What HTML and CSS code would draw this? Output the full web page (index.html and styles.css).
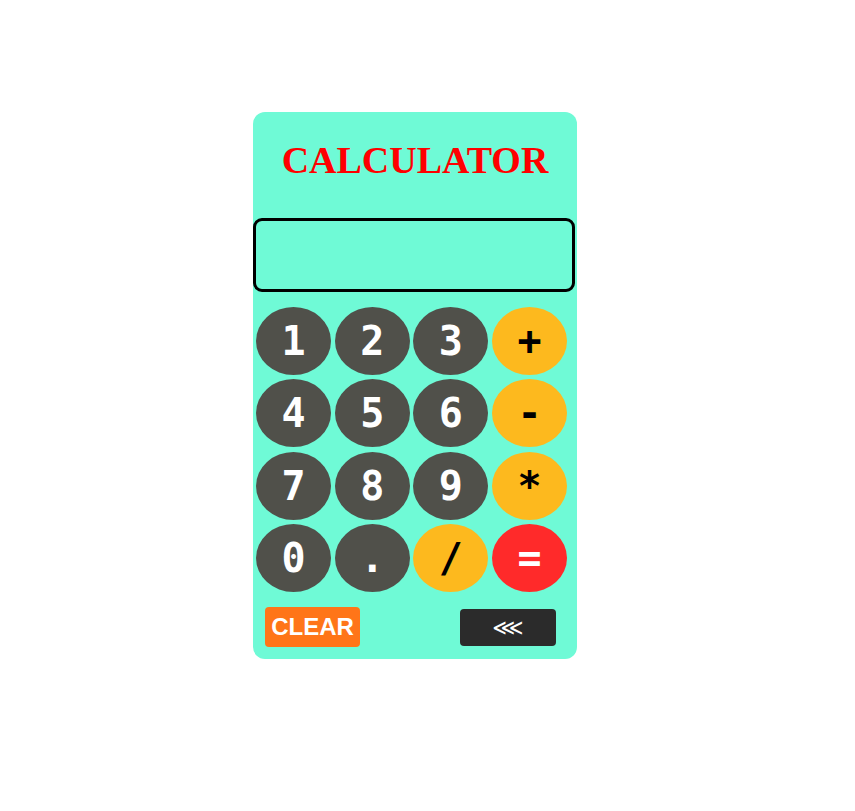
FILE: index.html
```html
<!DOCTYPE html>
<html>
<head>
<meta charset="utf-8">
<link rel="stylesheet" href="styles.css">
</head>
<body>
<div class="page">
  <div class="calc">
    <h1 class="title">CALCULATOR</h1>
    <div class="display"></div>
    <div class="keys">
      <button class="key num">1</button>
      <button class="key num">2</button>
      <button class="key num">3</button>
      <button class="key op">+</button>
      <button class="key num">4</button>
      <button class="key num">5</button>
      <button class="key num">6</button>
      <button class="key op">-</button>
      <button class="key num">7</button>
      <button class="key num">8</button>
      <button class="key num">9</button>
      <button class="key op">*</button>
      <button class="key num">0</button>
      <button class="key num">.</button>
      <button class="key op">/</button>
      <button class="key eq">=</button>
    </div>
    <div class="bottom">
      <button class="clear">CLEAR</button>
      <button class="back">&#8920;</button>
    </div>
  </div>
</div>
</body>
</html>
```
FILE: styles.css
```css
html, body {
  margin: 0;
  padding: 0;
  background: #ffffff;
}
.page {
  padding-top: 112px;
  padding-left: 253px;
}
.calc {
  width: 324px;
  height: 547px;
  box-sizing: border-box;
  background: #6ffad6;
  border-radius: 12px;
  display: flex;
  flex-direction: column;
}
.title {
  margin: 0;
  padding-top: 26px;
  height: 80px;
  box-sizing: border-box;
  text-align: center;
  font-family: "Liberation Serif", "Times New Roman", serif;
  font-weight: bold;
  font-size: 38px;
  line-height: 44px;
  color: #ff0000;
}
.display {
  margin-top: 26px;
  width: 322px;
  height: 74px;
  box-sizing: border-box;
  border: 3px solid #000000;
  border-radius: 9px;
}
.keys {
  margin-top: 15px;
  margin-left: 3px;
  display: grid;
  grid-template-columns: 75px 75px 75px 75px;
  grid-auto-rows: 68px;
  column-gap: 3.7px;
  row-gap: 4.4px;
}
.key {
  border: none;
  padding: 0;
  margin: 0;
  border-radius: 50%;
  font-family: "DejaVu Sans Mono", monospace;
  font-weight: bold;
  font-size: 40px;
  line-height: 68px;
  text-align: center;
}
.num {
  background: #50504a;
  color: #ffffff;
}
.op {
  background: #fdb91e;
  color: #000000;
}
.eq {
  background: #ff2a2a;
  color: #ffffff;
}
.bottom {
  margin-top: 15px;
  padding-left: 12px;
  padding-right: 21px;
  display: flex;
  justify-content: space-between;
  align-items: flex-start;
}
.clear {
  width: 95px;
  height: 40px;
  border: none;
  padding: 0;
  border-radius: 4px;
  background: #ff7518;
  color: #ffffff;
  font-family: "Liberation Sans", Arial, sans-serif;
  font-weight: bold;
  font-size: 24px;
}
.back {
  margin-top: 2px;
  width: 96px;
  height: 37px;
  border: none;
  padding: 0;
  border-radius: 4px;
  background: #2b2b2b;
  color: #ffffff;
  font-family: "DejaVu Sans", sans-serif;
  font-size: 22px;
}
```
